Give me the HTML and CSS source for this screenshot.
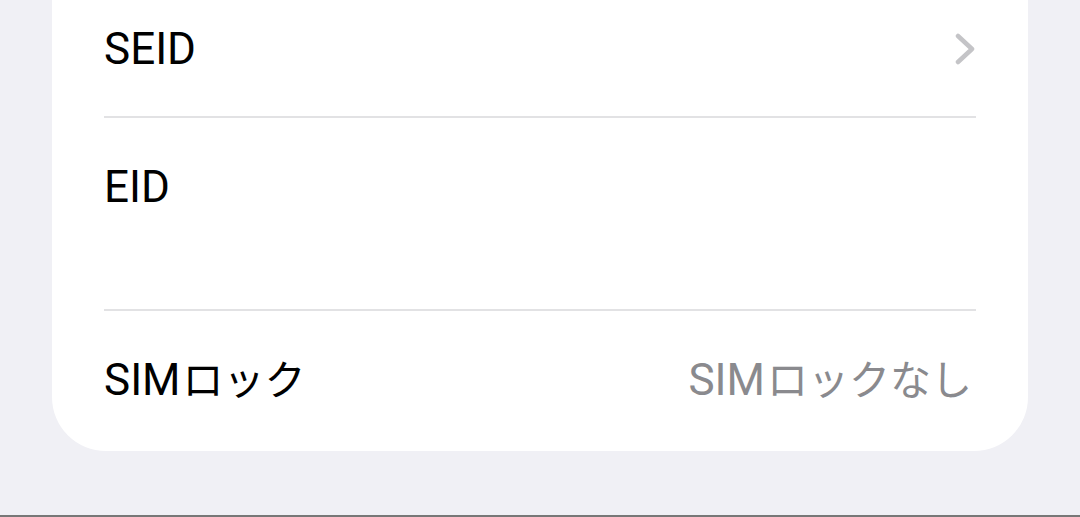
FILE: index.html
```html
<!DOCTYPE html>
<html lang="ja">
<head>
	<meta charset="UTF-8">
	<title>情報</title>
	<link rel="stylesheet" href="styles.css">
</head>
<body>
	<div class="screen">
		<section class="group">
			<div class="row">
				<span class="label">SEID</span>
				<svg class="chevron" width="20" height="32" viewBox="0 0 20 32">
					<path d="M3 3 L17 16 L3 29" />
				</svg>
			</div>
			<div class="row stack">
				<span class="label">EID</span>
				<span class="detail"></span>
			</div>
			<div class="row last">
				<span class="label">SIM<span class="kana">ロック</span></span>
				<span class="value">SIM<span class="kana">ロックなし</span></span>
			</div>
		</section>
	</div>
</body>
</html>
```

FILE: styles.css
```css
body{
	margin: 0;
	background: #f0f0f5;
	font-family: Roboto, "Noto Sans CJK JP", sans-serif;
	color: #000;
}
.screen{
	height: 515px;
	overflow: hidden;
	border-bottom: 2px solid #777;
}
/* 白いカード */
.group{
	margin: -20px 52px 0 52px;
	background: #fff;
	border-radius: 0 0 54px 54px;
}
.row{
	display: flex;
	align-items: center;
	justify-content: space-between;
	margin: 0 52px;
	padding: 43px 0 41px;
	border-bottom: 2px solid #e2e2e4;
	font-size: 44px;
	line-height: 52px;
}
.row.last{
	border-bottom: none;
	padding-bottom: 44px;
}
.row.stack{
	flex-direction: column;
	align-items: flex-start;
}
.detail{
	display: block;
	height: 55px;
}
/* カナは少し詰める */
.kana{
	font-size: 41px;
	margin-left: 2px;
}
.value{
	color: #8a8a8e;
	margin-right: 4px;
}
.chevron{
	display: block;
	margin-right: 1px;
}
.chevron path{
	fill: none;
	stroke: #c4c4c7;
	stroke-width: 4.5;
	stroke-linecap: round;
	stroke-linejoin: round;
}
```
